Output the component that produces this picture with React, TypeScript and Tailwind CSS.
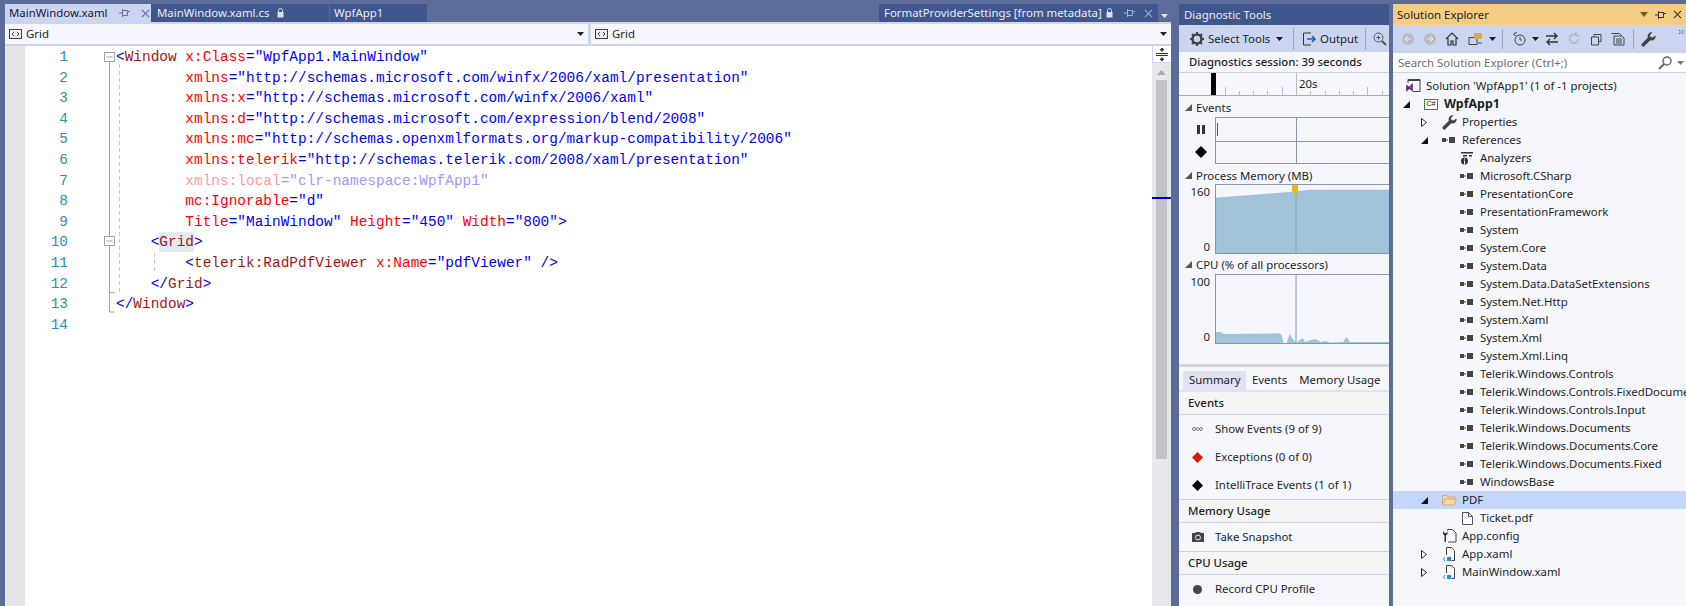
import type { ReactNode } from "react";

const SANS = "font-['Noto_Sans','Open_Sans',sans-serif]";

type Seg = [string, string];
const R = "text-[#ff0000]";
const B = "text-[#0000ff]";
const M = "text-[#a31515]";

const attr = (name: string, value: string, fade = false): Seg[] =>
  fade
    ? [
        ["text-[#ff9b9b]", name],
        ["text-[#9b9bff]", `="${value}"`],
      ]
    : [
        [R, name],
        [B, `="${value}"`],
      ];

const code: { pad: number; segs: Seg[] }[] = [
  {
    pad: 0,
    segs: [
      [B, "<"],
      [M, "Window"],
      [B, " "],
      ...attr("x:Class", "WpfApp1.MainWindow"),
    ],
  },
  { pad: 8, segs: attr("xmlns", "http://schemas.microsoft.com/winfx/2006/xaml/presentation") },
  { pad: 8, segs: attr("xmlns:x", "http://schemas.microsoft.com/winfx/2006/xaml") },
  { pad: 8, segs: attr("xmlns:d", "http://schemas.microsoft.com/expression/blend/2008") },
  { pad: 8, segs: attr("xmlns:mc", "http://schemas.openxmlformats.org/markup-compatibility/2006") },
  { pad: 8, segs: attr("xmlns:telerik", "http://schemas.telerik.com/2008/xaml/presentation") },
  { pad: 8, segs: attr("xmlns:local", "clr-namespace:WpfApp1", true) },
  { pad: 8, segs: attr("mc:Ignorable", "d") },
  {
    pad: 8,
    segs: [
      ...attr("Title", "MainWindow"),
      [B, " "],
      ...attr("Height", "450"),
      [B, " "],
      ...attr("Width", "800"),
      [B, ">"],
    ],
  },
  {
    pad: 4,
    segs: [
      [B, "<"],
      ["inline-block h-[20px] bg-[#e4e9f2] text-[#a31515]", "Grid"],
      [B, ">"],
    ],
  },
  {
    pad: 8,
    segs: [
      [B, "<"],
      [M, "telerik:RadPdfViewer"],
      [B, " "],
      ...attr("x:Name", "pdfViewer"),
      [B, " />"],
    ],
  },
  {
    pad: 4,
    segs: [
      [B, "</"],
      [M, "Grid"],
      [B, ">"],
    ],
  },
  {
    pad: 0,
    segs: [
      [B, "</"],
      [M, "Window"],
      [B, ">"],
    ],
  },
  { pad: 0, segs: [] },
];

const Pin = ({ color = "#5a6a9a" }: { color?: string }) => (
  <svg width="11" height="10" viewBox="0 0 11 10" fill="none" stroke={color}>
    <path d="M0 5h4M3.500 2.500h5v5h-5zM3.500 1v8M8.500 3.500H11" />
  </svg>
);

const Lock = ({ color }: { color: string }) => (
  <svg width="7" height="10" viewBox="0 0 7 10">
    <path d="M1.500 4V2.500a2 2 0 0 1 4 0V4" fill="none" stroke={color} />
    <rect x="0.500" y="4" width="6" height="5.500" fill={color} />
  </svg>
);

const Cross = ({ color, size = 9 }: { color: string; size?: number }) => (
  <svg width={size} height={size} viewBox="0 0 10 10" stroke={color} strokeWidth="1.200">
    <path d="M1 1l8 8M9 1l-8 8" />
  </svg>
);

const Caret = ({ color = "#1e1e1e" }: { color?: string }) => (
  <svg width="7" height="4" viewBox="0 0 7 4" fill={color}>
    <path d="M0 0h7L3.500 4z" />
  </svg>
);

const TagIcon = () => (
  <svg width="13" height="10" viewBox="0 0 13 10" fill="none" stroke="#444">
    <rect x="0.500" y="0.500" width="12" height="9" fill="#eee" />
    <path d="M5 3L3 5l2 2M8 3l2 2-2 2" />
  </svg>
);

const EditorTabs = () => (
  <div className={`flex h-[18px] items-stretch text-[11.4px] whitespace-nowrap ${SANS}`}>
    <div className="flex w-[146px] items-center bg-[#ccd5f0] pl-[4px] text-[#0e1a3a]">
      <span className="w-[110px]">MainWindow.xaml</span>
      <Pin />
      <span className="ml-[11px] flex"><Cross color="#5a6a9a" /></span>
    </div>
    <div className="flex w-[178px] items-center bg-[#40568d] pl-[6px] text-[#e8ecf8]">
      <span className="w-[120px]">MainWindow.xaml.cs</span>
      <Lock color="#d8dff0" />
    </div>
    <div className="ml-[1px] flex w-[97px] items-center bg-[#40568d] pl-[4px] text-[#e8ecf8]">WpfApp1</div>
    <div className="flex-1" />
    <div className="flex w-[279px] items-center bg-[#40568d] pl-[5px] text-[#e8ecf8]">
      <span className="w-[222px]">FormatProviderSettings [from metadata]</span>
      <Lock color="#d8dff0" />
      <span className="ml-[11px] flex"><Pin color="#9fb0d8" /></span>
      <span className="ml-[9px] flex"><Cross color="#9fb0d8" /></span>
    </div>
    <div className="flex w-[13px] items-center justify-center pt-[6px]"><Caret color="#dfe5f5" /></div>
  </div>
);

const NavDropdown = ({ className }: { className: string }) => (
  <div className={`flex items-center bg-[#f5f7fd] px-[4px] text-[11.4px] text-[#1e1e1e] ${className} ${SANS}`}>
    <TagIcon />
    <span className="ml-[4px] flex-1">Grid</span>
    <Caret />
  </div>
);

const NavBar = () => (
  <div className="flex h-[24px] gap-[3px] bg-[#ccd5f0] py-[2px]">
    <NavDropdown className="w-[583px]" />
    <NavDropdown className="flex-1" />
  </div>
);

const Gutter = () => (
  <svg className="absolute left-0 top-0" width="170" height="290" fill="none">
    <g stroke="#c8c8c8" strokeDasharray="4 3">
      <path d="M114.500 18v228M149.500 207v19" />
    </g>
    <g stroke="#a5a5a5">
      <path d="M104.500 16v250h5M104.500 246.500h5" />
      <rect x="99.500" y="6.500" width="10" height="9" fill="#fff" />
      <path d="M101.500 11h6" />
      <rect x="99.500" y="190.500" width="10" height="9" fill="#fff" />
      <path d="M101.500 195h6" />
    </g>
  </svg>
);

const Editor = () => (
  <div className="relative flex-1 overflow-hidden bg-white">
    <div className="flex h-full">
      <div className="w-[20px] shrink-0 bg-[#e6e7e8]" />
      <div className="relative flex-1 pt-[1px] font-['Liberation_Mono',monospace] text-[14.45px] leading-[20.6px] whitespace-pre">
        {code.map((line, i) => (
          <div key={i} className="flex h-[20.6px]">
            <span className="w-[43px] text-right text-[#2b91af]">{i + 1}</span>
            <span className="ml-[48px]" style={{ paddingLeft: line.pad * 8.67 }}>
              {line.segs.map(([color, text], j) => (
                <span key={j} className={color}>{text}</span>
              ))}
            </span>
          </div>
        ))}
      </div>
      <div className="flex w-[19px] shrink-0 flex-col items-center bg-[#e8e8ec]">
        <div className="flex h-[17px] w-full items-center justify-center border-b border-l border-[#ccd5f0] bg-white">
          <svg width="12" height="13" viewBox="0 0 12 13" stroke="#333" fill="#333">
            <path d="M0 5.500h12M0 7.500h12M6 0v4M6 9v4" fill="none" />
            <path d="M4 2l2-2 2 2zM4 11l2 2 2-2z" />
          </svg>
        </div>
        <svg className="mt-[7px]" width="9" height="5" viewBox="0 0 9 5" fill="#a8acb8"><path d="M0 5h9L4.500 0z" /></svg>
        <div className="relative mt-[5px] h-[379px] w-[11px] bg-[#c2c3c9]">
          <div className="absolute left-[-4px] top-[117px] h-[2px] w-[19px] bg-[#0000cc]" />
        </div>
      </div>
    </div>
    <Gutter />
  </div>
);

const SectionHead = ({ children, className = "" }: { children: ReactNode; className?: string }) => (
  <div className={`flex h-[17px] items-center text-[11.4px] text-[#1e1e1e] ${className}`}>
    <svg className="ml-[6px] mr-[4px]" width="7" height="7" viewBox="0 0 7 7" fill="#555"><path d="M7 0v7H0z" /></svg>
    {children}
  </div>
);

const GroupHead = ({ children }: { children: ReactNode }) => (
  <div className="flex h-[24px] items-center border-y border-[#cdd0de] bg-[#f5f5f5] pl-[9px] text-[11.4px] font-medium text-[#1e1e1e]">
    {children}
  </div>
);

const DiagRow = ({ icon, children }: { icon: ReactNode; children: ReactNode }) => (
  <div className="flex h-[28px] items-center text-[11.4px] text-[#1e1e1e]">
    <span className="flex w-[36px] shrink-0 justify-center pl-[7px] pr-[6px]">{icon}</span>
    <span>{children}</span>
  </div>
);

const Diamond = ({ color, size = 11 }: { color: string; size?: number }) => (
  <svg width={size} height={size} viewBox="0 0 11 11" fill={color}><path d="M5.500 0L11 5.500 5.500 11 0 5.500z" /></svg>
);

const Diagnostics = () => (
  <div className={`flex w-[210px] shrink-0 flex-col overflow-hidden whitespace-nowrap bg-[#f5f7fd] ${SANS}`}>
    <div className="flex h-[21px] shrink-0 items-center bg-[#40568d] pl-[5px] text-[11.4px] text-[#e8ecf8]">Diagnostic Tools</div>
    <div className="flex h-[27px] shrink-0 items-center bg-[#ccd5f0] text-[11.4px] text-[#1e1e1e]">
      <svg className="ml-[11px] shrink-0" width="14" height="14" viewBox="0 0 14 14">
        <circle cx="7" cy="7" r="4.500" fill="none" stroke="#444" strokeWidth="2.600" />
        <path d="M7 0v3M7 11v3M0 7h3M11 7h3M2 2l2 2M10 10l2 2M12 2l-2 2M4 10l-2 2" stroke="#444" strokeWidth="2" />
      </svg>
      <span className="ml-[4px] w-[68px]">Select Tools</span>
      <Caret />
      <span className="ml-[10px] h-[22px] w-px bg-[#9aa6c4]" />
      <svg className="ml-[8px] shrink-0" width="15" height="14" viewBox="0 0 15 14" fill="none">
        <path d="M9 1H1.500v12H9" stroke="#333" />
        <path d="M5 7h8M10 4l3 3-3 3" stroke="#1c5fa8" strokeWidth="1.600" />
      </svg>
      <span className="ml-[3px] w-[38px]">Output</span>
      <span className="ml-[7px] h-[22px] w-px bg-[#9aa6c4]" />
      <svg className="ml-[7px] shrink-0" width="14" height="14" viewBox="0 0 14 14" fill="none">
        <circle cx="5.500" cy="5.500" r="4.500" stroke="#555" />
        <path d="M3.500 5.500h4M5.500 3.500v4" stroke="#1c5fa8" />
        <path d="M9 9l4 4" stroke="#555" strokeWidth="2" />
      </svg>
    </div>
    <div className="flex h-[21px] shrink-0 items-center border-b border-[#cdd0de] pl-[10px] text-[11.4px] font-medium text-[#1e1e1e]">
      Diagnostics session: 39 seconds
    </div>
    <div className="relative h-[23px] shrink-0 border-b border-[#a8b0c8] text-[11.4px] text-[#1e1e1e]">
      <svg className="absolute left-0 top-0" width="210" height="22" stroke="#b8bcc8">
        <path d="M46.500 14v8M60.500 18v4M74.500 18v4M88.500 18v4M103.500 14v8M117.500 0v22M131.500 18v4M146.500 18v4M160.500 18v4M174.500 18v4M188.500 14v8M203.500 18v4" />
      </svg>
      <div className="absolute left-[32px] top-0 h-[22px] w-[5px] bg-black" />
      <span className="absolute left-[120px] top-[2px]">20s</span>
    </div>
    <SectionHead className="mt-[3px] shrink-0">Events</SectionHead>
    <div className="mt-[1px] flex shrink-0">
      <div className="flex w-[36px] flex-col items-center pl-[10px] pr-[2px]">
        <div className="flex h-[24px] items-center gap-[2px]">
          <span className="h-[9px] w-[3px] bg-[#333]" />
          <span className="h-[9px] w-[3px] bg-[#333]" />
        </div>
        <div className="flex h-[22px] items-center"><Diamond color="#000" size={12} /></div>
      </div>
      <div className="h-[47px] flex-1 border-y border-l border-[#8d95ad]">
        <div className="relative h-[24px] border-b border-[#8d95ad]">
          <div className="absolute left-[1px] top-[5px] h-[13px] w-px bg-[#555]" />
          <div className="absolute left-[80px] top-0 h-full w-px bg-[#8d95ad]" />
        </div>
        <div className="relative h-[21px]">
          <div className="absolute left-[80px] top-0 h-full w-px bg-[#8d95ad]" />
        </div>
      </div>
    </div>
    <SectionHead className="mt-[3px] shrink-0">Process Memory (MB)</SectionHead>
    <div className="flex h-[70px] shrink-0">
      <div className="flex w-[36px] flex-col justify-between pr-[5px] text-right text-[11.4px] leading-[14px] text-[#1e1e1e]">
        <span className="mt-[1px]">160</span>
        <span>0</span>
      </div>
      <div className="relative flex-1 border-y border-l border-[#8d95ad]">
        <svg className="h-full w-full" viewBox="0 0 174 68" preserveAspectRatio="none">
          <path d="M0 13 L40 10 L78 7 L96 5 L174 5 V68 H0Z" fill="#a1c4d9" stroke="#8db4cc" strokeWidth="0.500" />
          <path d="M80.500 0v68" stroke="#8aa4b8" />
        </svg>
        <svg className="absolute left-[76px] top-0" width="6" height="10" viewBox="0 0 6 10" fill="#f5b114"><path d="M0 0h6v6L3 10 0 6z" /></svg>
      </div>
    </div>
    <SectionHead className="mt-[2px] shrink-0">CPU (% of all processors)</SectionHead>
    <div className="mt-[1px] flex h-[70px] shrink-0">
      <div className="flex w-[36px] flex-col justify-between pr-[5px] text-right text-[11.4px] leading-[14px] text-[#1e1e1e]">
        <span className="mt-[1px]">100</span>
        <span>0</span>
      </div>
      <div className="relative flex-1 border-y border-l border-[#8d95ad]">
        <svg className="h-full w-full" viewBox="0 0 174 68" preserveAspectRatio="none">
          <path d="M0 57 L5 57 L8 59 L60 58.500 L63 58 L66 60 L68 68 L71 68 L74 59 L78 65 L81 68 L83 66 L87 63 L90 67 L95 65 L100 64 L105 67 L110 66 L115 67.500 L128 67 L131 62 L135 67 L174 67 V68 H0Z" fill="#a1c4d9" />
          <path d="M80.500 0v68" stroke="#8d95ad" />
        </svg>
      </div>
    </div>
    <div className="mt-[20px] h-[3px] shrink-0 bg-[#d5d6dc]" />
    <div className="flex h-[25px] shrink-0 border-b-2 border-[#dfe3f2] pl-[4px] pt-[4px] text-[11.4px] text-[#1e1e1e]">
      <span className="w-[63px] bg-[#dfe3f2] pl-[6px]">Summary</span>
      <span className="ml-[6px]">Events</span>
      <span className="ml-[12px]">Memory Usage</span>
    </div>
    <div className="flex h-[23px] shrink-0 items-center border-b border-[#cdd0de] bg-[#f5f5f5] pl-[9px] text-[11.4px] font-medium text-[#1e1e1e]">Events</div>
    <DiagRow icon={<svg width="11" height="6" viewBox="0 0 11 6" fill="none" stroke="#777"><circle cx="2" cy="3" r="1.500" /><circle cx="5.500" cy="3" r="1.500" /><circle cx="9" cy="3" r="1.500" /></svg>}>Show Events (9 of 9)</DiagRow>
    <DiagRow icon={<Diamond color="#e51400" />}>Exceptions (0 of 0)</DiagRow>
    <DiagRow icon={<Diamond color="#000" />}>IntelliTrace Events (1 of 1)</DiagRow>
    <GroupHead>Memory Usage</GroupHead>
    <DiagRow icon={<svg width="12" height="10" viewBox="0 0 12 10"><path d="M0 1h3l1-1h4l1 1h3v9H0z" fill="#444" /><circle cx="6" cy="5.500" r="2.500" fill="none" stroke="#eee" /></svg>}>Take Snapshot</DiagRow>
    <GroupHead>CPU Usage</GroupHead>
    <DiagRow icon={<span className="h-[9px] w-[9px] rounded-full bg-[#444]" />}>Record CPU Profile</DiagRow>
  </div>
);

const RefIcon = () => (
  <svg width="14" height="8" viewBox="0 0 14 8" fill="#444">
    <rect x="0" y="2" width="4" height="4" />
    <rect x="4" y="3.500" width="2" height="1" />
    <rect x="7" y="1" width="6" height="6" />
  </svg>
);

const Open = () => <svg width="7" height="7" viewBox="0 0 7 7" fill="#111"><path d="M7 0v7H0z" /></svg>;
const Closed = () => (
  <svg width="6" height="9" viewBox="0 0 6 9" fill="#fff" stroke="#222"><path d="M0.500 0.500l5 4-5 4z" /></svg>
);

const Wrench = () => (
  <svg width="15" height="15" viewBox="0 0 15 15" fill="#444">
    <path d="M14.500 3.500a4 4 0 0 1-5.200 4.700L3.500 14a1.700 1.700 0 0 1-2.500-2.500l5.800-5.800A4 4 0 0 1 11.500.500L9 3l.500 2 2 .500z" />
  </svg>
);

const XamlIcon = () => (
  <svg width="13" height="15" viewBox="0 0 13 15" fill="none">
    <path d="M3.500 8V.500h5l3 3v10h-3" stroke="#444" />
    <rect x="4" y="10" width="4" height="4" fill="#1e90e0" />
    <path d="M2 10l-1.500 2L2 14" stroke="#1e90e0" />
  </svg>
);

type Node = { label: string; depth: number; icon?: ReactNode; arrow?: "open" | "closed"; bold?: boolean; selected?: boolean };

const refs = [
  "Microsoft.CSharp",
  "PresentationCore",
  "PresentationFramework",
  "System",
  "System.Core",
  "System.Data",
  "System.Data.DataSetExtensions",
  "System.Net.Http",
  "System.Xaml",
  "System.Xml",
  "System.Xml.Linq",
  "Telerik.Windows.Controls",
  "Telerik.Windows.Controls.FixedDocumentViewers",
  "Telerik.Windows.Controls.Input",
  "Telerik.Windows.Documents",
  "Telerik.Windows.Documents.Core",
  "Telerik.Windows.Documents.Fixed",
  "WindowsBase",
];

const nodes: Node[] = [
  {
    label: "Solution 'WpfApp1' (1 of -1 projects)",
    depth: 0,
    icon: (
      <svg width="15" height="14" viewBox="0 0 15 14" fill="none">
        <path d="M2 4V.500h12v12H7" stroke="#444" />
        <path d="M2 1.500h12" stroke="#444" />
        <path d="M1 7l5 4V6l-5 5z" stroke="#68217a" strokeWidth="1.600" />
      </svg>
    ),
  },
  {
    label: "WpfApp1",
    depth: 1,
    bold: true,
    arrow: "open",
    icon: (
      <span className="flex h-[11px] w-[14px] items-center justify-center border border-[#388a34] bg-white font-['Liberation_Sans',sans-serif] text-[7.5px] font-normal leading-none text-[#222]">C#</span>
    ),
  },
  { label: "Properties", depth: 2, arrow: "closed", icon: <Wrench /> },
  { label: "References", depth: 2, arrow: "open", icon: <RefIcon /> },
  {
    label: "Analyzers",
    depth: 3,
    icon: (
      <svg width="14" height="13" viewBox="0 0 14 13" fill="#333">
        <path d="M1 0h12v1.500H1zM3 3h4v1.500H3zM9 3h3v1.500H9z" />
        <circle cx="4.500" cy="9" r="3.500" />
        <path d="M4 6.500h1v1H4zM4 8.500h1V12H4z" fill="#fff" />
      </svg>
    ),
  },
  ...refs.map((label) => ({ label, depth: 3, icon: <RefIcon /> })),
  {
    label: "PDF",
    depth: 2,
    arrow: "open",
    selected: true,
    icon: (
      <svg width="15" height="12" viewBox="0 0 15 12" fill="#f0d9a8" stroke="#c9ad78">
        <path d="M.500 11V1.500h4.500l1 1.500h7v2M.500 11l2.500-6h11.500l-2.500 6z" />
      </svg>
    ),
  },
  {
    label: "Ticket.pdf",
    depth: 3,
    icon: (
      <svg width="11" height="13" viewBox="0 0 11 13" fill="#fff" stroke="#555">
        <path d="M.500.500h6l4 4v8H.500zM6.500.500v4h4" />
      </svg>
    ),
  },
  {
    label: "App.config",
    depth: 2,
    icon: (
      <svg width="15" height="15" viewBox="0 0 15 15" fill="none">
        <path d="M5.500 1.500V.500h5l3.500 3.500v9h-8" stroke="#444" />
        <path d="M1 2v3l1.500 1.500V13h1.500V6.500L5.500 5V2L4.500 4h-2z" fill="#333" />
      </svg>
    ),
  },
  { label: "App.xaml", depth: 2, arrow: "closed", icon: <XamlIcon /> },
  { label: "MainWindow.xaml", depth: 2, arrow: "closed", icon: <XamlIcon /> },
];

const TreeRow = ({ node }: { node: Node }) => (
  <div className={`flex h-[18px] items-center whitespace-nowrap text-[#1e1e1e] ${node.selected ? "bg-[#c4d5ff]" : ""} ${node.bold ? "text-[12.4px] font-bold" : "text-[11.4px]"}`}>
    <span
      className="flex w-[10px] shrink-0 items-center justify-center"
      style={{ marginLeft: node.depth * 18 - 10 }}
    >
      {node.arrow === "open" && <Open />}
      {node.arrow === "closed" && <Closed />}
    </span>
    <span className="ml-[10px] flex w-[20px] shrink-0 justify-center">{node.icon}</span>
    <span className="ml-[3px]">{node.label}</span>
  </div>
);

const ToolIcon = ({ children, w = 16, className = "" }: { children: ReactNode; w?: number; className?: string }) => (
  <svg className={`shrink-0 ${className}`} width={w} height="14" viewBox={`0 0 ${w} 14`} fill="none">{children}</svg>
);

const SolutionExplorer = () => (
  <div className={`flex w-[293px] shrink-0 flex-col overflow-hidden bg-[#f5f7fd] ${SANS}`}>
    <div className="flex h-[21px] shrink-0 items-center bg-[#f5cc84] pl-[4px] pr-[4px] text-[11.4px] text-[#1e1e1e]">
      <span className="flex-1">Solution Explorer</span>
      <svg width="8" height="5" viewBox="0 0 8 5" fill="#6b5a2b"><path d="M0 0h8L4 5z" /></svg>
      <span className="ml-[7px] flex"><Pin color="#333" /></span>
      <span className="ml-[7px] flex"><Cross color="#333" /></span>
    </div>
    <div className="flex h-[28px] shrink-0 items-center bg-[#ccd5f0]">
      <ToolIcon w={12} className="ml-[9px]"><circle cx="6" cy="7" r="6" fill="#b9bcc6" /><path d="M9 7H3M6 4L3 7l3 3" stroke="#eee" /></ToolIcon>
      <ToolIcon w={12} className="ml-[10px]"><circle cx="6" cy="7" r="6" fill="#b9bcc6" /><path d="M3 7h6M6 4l3 3-3 3" stroke="#eee" /></ToolIcon>
      <ToolIcon w={14} className="ml-[9px]"><path d="M1 7l6-6 6 6M3 6v7h3V9h2v4h3V6" stroke="#333" strokeWidth="1.200" /></ToolIcon>
      <ToolIcon w={15} className="ml-[9px]">
        <path d="M1 5.500h8v7H1z" stroke="#444" />
        <path d="M6 1h8v6H6z" fill="#d8a94f" />
        <path d="M10 11h4" stroke="#1c5fa8" />
      </ToolIcon>
      <span className="ml-[6px] flex"><Caret /></span>
      <span className="ml-[6px] h-[20px] w-px bg-[#9aa6c4]" />
      <ToolIcon w={14} className="ml-[9px]">
        <circle cx="8" cy="8" r="5" stroke="#444" />
        <path d="M8 5v3h2M1 2l3 2M2 1h3" stroke="#444" />
      </ToolIcon>
      <span className="ml-[6px] flex"><Caret /></span>
      <ToolIcon w={12} className="ml-[7px]"><path d="M0 4h11M8 1l3 3-3 3M12 10H1M4 7l-3 3 3 3" stroke="#333" strokeWidth="1.400" /></ToolIcon>
      <ToolIcon w={12} className="ml-[10px]"><path d="M10.500 7a4.500 4.500 0 1 1-2-4M8 0v3.500h3.500" stroke="#b4b7c2" strokeWidth="1.600" /></ToolIcon>
      <ToolIcon w={11} className="ml-[11px]"><path d="M.500 5h7v8h-7zM3 5V2.500h7v7H8" stroke="#444" /></ToolIcon>
      <ToolIcon w={14} className="ml-[9px]"><path d="M.500 1.500h8l2 2M3 4h8l2 2v7H3zM5 7h6M5 9h6M5 11h6" stroke="#444" /></ToolIcon>
      <span className="ml-[8px] h-[20px] w-px bg-[#9aa6c4]" />
      <span className="ml-[7px] flex"><Wrench /></span>
      <svg className="mb-[14px] ml-auto mr-[1px]" width="6" height="5" viewBox="0 0 6 5" fill="#444"><path d="M0 0h1v1H0zM3 0h1v1H3zM1 1.500h1v1H1zM4 1.500h1v1H4zM0 3h1v1H0zM3 3h1v1H3z" /></svg>
    </div>
    <div className="flex h-[20px] shrink-0 items-center border-b border-[#ccd5f0] bg-white pl-[5px] pr-[2px] text-[11.4px] text-[#6d6d6d]">
      <span className="flex-1">Search Solution Explorer (Ctrl+;)</span>
      <svg width="14" height="14" viewBox="0 0 14 14" fill="none" stroke="#666"><circle cx="9" cy="5" r="4" strokeWidth="1.500" /><path d="M6 8l-5 5" strokeWidth="2" /></svg>
      <span className="ml-[5px] flex"><Caret color="#777" /></span>
    </div>
    <div className="mt-[4px]">
      {nodes.map((node) => (
        <TreeRow key={node.label} node={node} />
      ))}
    </div>
  </div>
);

export default function App() {
  return (
    <div className="flex h-[606px] w-[1686px] gap-[4px] overflow-hidden bg-[#5d6b99] pl-[5px] pt-[4px]">
      <div className="mr-[4px] flex w-[1166px] shrink-0 flex-col">
        <EditorTabs />
        <NavBar />
        <Editor />
      </div>
      <Diagnostics />
      <SolutionExplorer />
    </div>
  );
}
